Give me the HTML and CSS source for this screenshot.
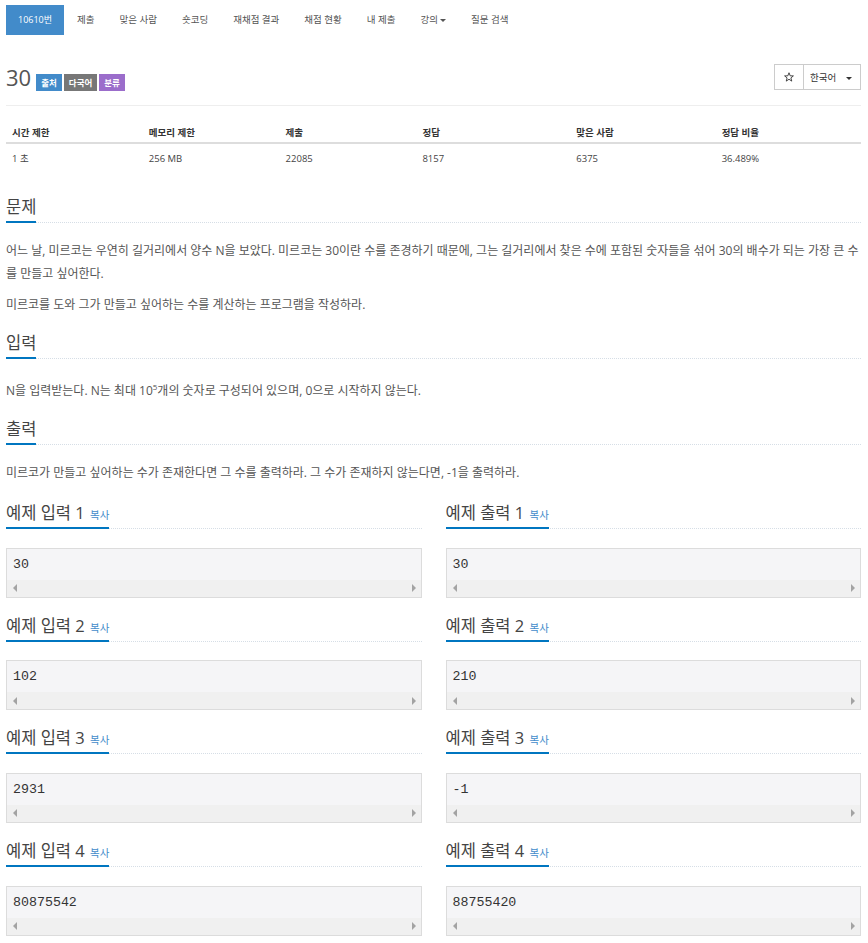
FILE: index.html
```html
<!DOCTYPE html>
<html lang="ko">
<head>
  <meta charset="UTF-8" />
  <meta name="viewport" content="width=device-width, initial-scale=1.0"/>
  <title>10610번: 30</title>
  <link rel="stylesheet" href="styles.css">
</head>
<body>
  <div class="container">
    <ul class="nav">
      <li class="active"><a href="#">10610번</a></li>
      <li><a href="#">제출</a></li>
      <li><a href="#">맞은 사람</a></li>
      <li><a href="#">숏코딩</a></li>
      <li><a href="#">재채점 결과</a></li>
      <li><a href="#">채점 현황</a></li>
      <li><a href="#">내 제출</a></li>
      <li><a href="#">강의<span class="caret"></span></a></li>
      <li><a href="#">질문 검색</a></li>
    </ul>

    <div class="page-header">
      <h1 class="title">
        <span>30</span>
        <span class="label label-source">출처</span>
        <span class="label label-lang">다국어</span>
        <span class="label label-tag">분류</span>
      </h1>
      <div class="btn-group">
        <button class="btn btn-star">
          <svg width="10" height="10" viewBox="0 0 20 20">
            <path d="M10 1.5 L12.4 7.6 L18.8 7.8 L13.8 11.8 L15.5 18.2 L10 14.5 L4.5 18.2 L6.2 11.8 L1.2 7.8 L7.6 7.6 Z" fill="none" stroke="#333" stroke-width="1.8" stroke-linejoin="miter"/>
          </svg>
        </button>
        <button class="btn btn-lang">한국어<span class="caret"></span></button>
      </div>
    </div>

    <table class="problem-info">
      <thead>
        <tr>
          <th class="w16">시간 제한</th>
          <th class="w16">메모리 제한</th>
          <th class="w16">제출</th>
          <th class="w18">정답</th>
          <th class="w17">맞은 사람</th>
          <th class="w17">정답 비율</th>
        </tr>
      </thead>
      <tbody>
        <tr>
          <td>1 초</td>
          <td>256 MB</td>
          <td>22085</td>
          <td>8157</td>
          <td>6375</td>
          <td>36.489%</td>
        </tr>
      </tbody>
    </table>

    <section class="problem-section">
      <div class="headline"><h2>문제</h2></div>
      <div class="problem-text">
        <p>어느 날, 미르코는 우연히 길거리에서 양수 N을 보았다. 미르코는 30이란 수를 존경하기 때문에, 그는 길거리에서 찾은 수에 포함된 숫자들을 섞어 30의 배수가 되는 가장 큰 수를 만들고 싶어한다.</p>
        <p>미르코를 도와 그가 만들고 싶어하는 수를 계산하는 프로그램을 작성하라.</p>
      </div>
    </section>

    <section class="problem-section">
      <div class="headline"><h2>입력</h2></div>
      <div class="problem-text">
        <p>N을 입력받는다. N는 최대 10<sup>5</sup>개의 숫자로 구성되어 있으며, 0으로 시작하지 않는다.</p>
      </div>
    </section>

    <section class="problem-section">
      <div class="headline"><h2>출력</h2></div>
      <div class="problem-text">
        <p>미르코가 만들고 싶어하는 수가 존재한다면 그 수를 출력하라. 그 수가 존재하지 않는다면, -1을 출력하라.</p>
      </div>
    </section>

    <div class="sample-grid">
      <section class="sample">
        <div class="headline"><h2>예제 입력 1 <a class="copy-button" href="#">복사</a></h2></div>
        <div class="sample-box"><pre class="sample-data">30</pre><div class="scrollbar"><span class="arrow-left"></span><span class="arrow-right"></span></div></div>
      </section>
      <section class="sample">
        <div class="headline"><h2>예제 출력 1 <a class="copy-button" href="#">복사</a></h2></div>
        <div class="sample-box"><pre class="sample-data">30</pre><div class="scrollbar"><span class="arrow-left"></span><span class="arrow-right"></span></div></div>
      </section>
      <section class="sample">
        <div class="headline"><h2>예제 입력 2 <a class="copy-button" href="#">복사</a></h2></div>
        <div class="sample-box"><pre class="sample-data">102</pre><div class="scrollbar"><span class="arrow-left"></span><span class="arrow-right"></span></div></div>
      </section>
      <section class="sample">
        <div class="headline"><h2>예제 출력 2 <a class="copy-button" href="#">복사</a></h2></div>
        <div class="sample-box"><pre class="sample-data">210</pre><div class="scrollbar"><span class="arrow-left"></span><span class="arrow-right"></span></div></div>
      </section>
      <section class="sample">
        <div class="headline"><h2>예제 입력 3 <a class="copy-button" href="#">복사</a></h2></div>
        <div class="sample-box"><pre class="sample-data">2931</pre><div class="scrollbar"><span class="arrow-left"></span><span class="arrow-right"></span></div></div>
      </section>
      <section class="sample">
        <div class="headline"><h2>예제 출력 3 <a class="copy-button" href="#">복사</a></h2></div>
        <div class="sample-box"><pre class="sample-data">-1</pre><div class="scrollbar"><span class="arrow-left"></span><span class="arrow-right"></span></div></div>
      </section>
      <section class="sample">
        <div class="headline"><h2>예제 입력 4 <a class="copy-button" href="#">복사</a></h2></div>
        <div class="sample-box"><pre class="sample-data">80875542</pre><div class="scrollbar"><span class="arrow-left"></span><span class="arrow-right"></span></div></div>
      </section>
      <section class="sample">
        <div class="headline"><h2>예제 출력 4 <a class="copy-button" href="#">복사</a></h2></div>
        <div class="sample-box"><pre class="sample-data">88755420</pre><div class="scrollbar"><span class="arrow-left"></span><span class="arrow-right"></span></div></div>
      </section>
    </div>
  </div>
</body>
</html>
```

FILE: styles.css
```css
body { margin: 0; font-family: "Open Sans", "Noto Sans CJK KR", sans-serif; color: #555; background: #fff; }
.container { width: 855px; margin-left: 6px; padding-top: 5px; }

/* top tabs */
.nav { display: flex; list-style: none; margin: 0; padding: 0; }
.nav li + li { margin-left: 1px; }
.nav a {
  display: block; height: 30px; line-height: 30px; padding: 0 12px;
  font-size: 9.5px; color: #555; text-decoration: none;
}
.nav .active a { background: #428bca; color: #fff; font-size: 9px; }
.caret {
  display: inline-block; width: 0; height: 0; margin-left: 2px; vertical-align: middle;
  border-top: 3px solid #555; border-left: 3px solid transparent; border-right: 3px solid transparent;
}

/* title row */
.page-header {
  display: flex; justify-content: space-between; align-items: center;
  margin-top: 29px; padding-bottom: 15px; border-bottom: 1px solid #eee;
}
.title { display: flex; height: 26px; margin: 0; font-size: 22px; font-weight: normal; line-height: 26px; color: #555; }
.label {
  align-self: flex-end; margin: 0 0 -1px 2px; padding: 0 5px;
  height: 17px; line-height: 17px; font-size: 8.5px; font-weight: bold; color: #fff;
}
.label-source { margin-left: 5px; background: #428bca; }
.label-lang { background: #777; }
.label-tag { background: #9b6dcb; }

.btn-group { display: flex; }
.btn {
  box-sizing: border-box; height: 26px; border: 1px solid #ccc; background: #fff;
  font-family: inherit; font-size: 9.5px; color: #333; padding: 0;
}
.btn-star { width: 30px; display: flex; align-items: center; justify-content: center; }
.btn-lang { width: 58px; margin-left: -1px; padding-left: 6px; text-align: left; }
.btn-lang .caret { margin-left: 10px; border-top-color: #333; }

/* info table */
.problem-info { width: 100%; border-collapse: collapse; margin: 16px 0 22px; color: #444; }
.problem-info th {
  text-align: left; padding: 4px 6px 2px; line-height: 14px;
  font-size: 9.5px; color: #333; border-bottom: 2px solid #ddd;
}
.problem-info td { padding: 8px 6px; line-height: 14px; font-size: 9.5px; }
.w16 { width: 16%; }
.w17 { width: 17%; }
.w18 { width: 18%; }

/* sections */
.problem-section { margin-bottom: 16px; }
.headline { display: flex; border-bottom: 1px dotted #d6dee6; }
.headline h2 {
  margin: 0 0 -1px; padding-bottom: 3px; border-bottom: 2px solid #0076c0;
  font-size: 16.5px; font-weight: normal; line-height: 22px; color: #444;
}
.problem-text { margin-top: 16px; font-size: 12px; line-height: 23px; }
.problem-text p { margin: 0 0 8px; }
sup { font-size: 8px; }

/* samples */
.sample-grid { display: grid; grid-template-columns: 1fr 1fr; column-gap: 24px; row-gap: 17.2px; margin-top: 18px; }
.copy-button { margin-left: 1px; font-size: 10.5px; line-height: 1; color: #428bca; text-decoration: none; }
.sample-box { margin-top: 18.5px; border: 1px solid #dcdcdc; background: #f5f5f7; }
.sample-data {
  margin: 0; padding: 7px 6px; font-family: "Liberation Mono", monospace;
  font-size: 13.3px; line-height: 17px; color: #333;
}
.scrollbar {
  display: flex; justify-content: space-between; align-items: center;
  height: 17px; padding: 0 5px 0 6px; background: #f0f0f0;
}
.arrow-left, .arrow-right { width: 0; height: 0; border-top: 4px solid transparent; border-bottom: 4px solid transparent; }
.arrow-left { border-right: 4px solid #a3a3a3; }
.arrow-right { border-left: 4px solid #a3a3a3; }
```
